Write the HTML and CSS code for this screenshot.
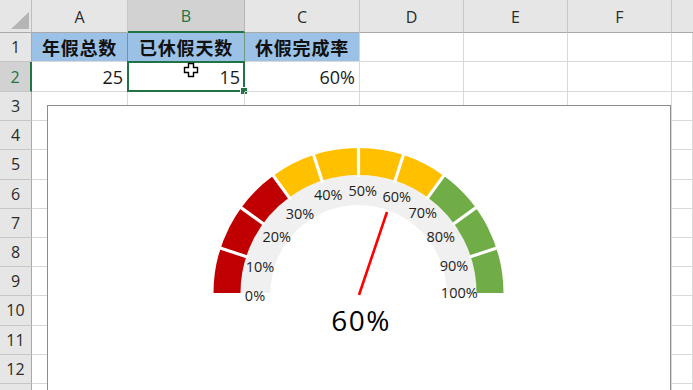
FILE: index.html
```html
<!DOCTYPE html>
<html lang="zh-CN">
<head>
<meta charset="utf-8">
<title>休假完成率</title>
<link rel="stylesheet" href="styles.css">
</head>
<body>
<div class="sheet">
  <div class="row head-row">
    <div class="corner"><span class="tri"></span></div>
    <div class="colh">A</div>
    <div class="colh sel">B</div>
    <div class="colh">C</div>
    <div class="colh">D</div>
    <div class="colh">E</div>
    <div class="colh">F</div>
    <div class="colh last"></div>
  </div>
  <div class="row r1">
    <div class="rowh">1</div>
    <div class="cell title">年假总数</div>
    <div class="cell title b1">已休假天数</div>
    <div class="cell title">休假完成率</div>
    <div class="cell"></div><div class="cell"></div><div class="cell"></div><div class="cell"></div>
  </div>
  <div class="row r2">
    <div class="rowh sel">2</div>
    <div class="cell num">25</div>
    <div class="cell num active">15<span class="handle"></span></div>
    <div class="cell num">60%</div>
    <div class="cell"></div><div class="cell"></div><div class="cell"></div><div class="cell"></div>
  </div>
  <div class="row"><div class="rowh">3</div><div class="cell"></div><div class="cell"></div><div class="cell"></div><div class="cell"></div><div class="cell"></div><div class="cell"></div><div class="cell"></div></div>
  <div class="row"><div class="rowh">4</div><div class="cell"></div><div class="cell"></div><div class="cell"></div><div class="cell"></div><div class="cell"></div><div class="cell"></div><div class="cell"></div></div>
  <div class="row"><div class="rowh">5</div><div class="cell"></div><div class="cell"></div><div class="cell"></div><div class="cell"></div><div class="cell"></div><div class="cell"></div><div class="cell"></div></div>
  <div class="row"><div class="rowh">6</div><div class="cell"></div><div class="cell"></div><div class="cell"></div><div class="cell"></div><div class="cell"></div><div class="cell"></div><div class="cell"></div></div>
  <div class="row"><div class="rowh">7</div><div class="cell"></div><div class="cell"></div><div class="cell"></div><div class="cell"></div><div class="cell"></div><div class="cell"></div><div class="cell"></div></div>
  <div class="row"><div class="rowh">8</div><div class="cell"></div><div class="cell"></div><div class="cell"></div><div class="cell"></div><div class="cell"></div><div class="cell"></div><div class="cell"></div></div>
  <div class="row"><div class="rowh">9</div><div class="cell"></div><div class="cell"></div><div class="cell"></div><div class="cell"></div><div class="cell"></div><div class="cell"></div><div class="cell"></div></div>
  <div class="row"><div class="rowh">10</div><div class="cell"></div><div class="cell"></div><div class="cell"></div><div class="cell"></div><div class="cell"></div><div class="cell"></div><div class="cell"></div></div>
  <div class="row"><div class="rowh">11</div><div class="cell"></div><div class="cell"></div><div class="cell"></div><div class="cell"></div><div class="cell"></div><div class="cell"></div><div class="cell"></div></div>
  <div class="row"><div class="rowh">12</div><div class="cell"></div><div class="cell"></div><div class="cell"></div><div class="cell"></div><div class="cell"></div><div class="cell"></div><div class="cell"></div></div>
  <div class="row"><div class="rowh"></div><div class="cell"></div><div class="cell"></div><div class="cell"></div><div class="cell"></div><div class="cell"></div><div class="cell"></div><div class="cell"></div></div>

  <svg class="cursor" width="16" height="16" viewBox="0 0 16 16">
    <path d="M5.5 1.5h5v4h4v5h-4v4h-5v-4h-4v-5h4z" fill="#fff" stroke="#000" stroke-width="1.4"/>
  </svg>

  <div class="chart">
    <svg class="gauge" width="624" height="290" viewBox="0 0 624 290">
      <path d="M208.5 188 A103 103 0 0 1 414.5 188" fill="none" stroke="#f0f0f0" stroke-width="30"/>
      <path d="M180 188 A131.5 131.5 0 0 1 234.21 81.62" fill="none" stroke="#c00000" stroke-width="27"/>
      <path d="M234.21 81.62 A131.5 131.5 0 0 1 388.79 81.62" fill="none" stroke="#ffc000" stroke-width="27"/>
      <path d="M388.79 81.62 A131.5 131.5 0 0 1 443 188" fill="none" stroke="#70ad47" stroke-width="27"/>
      <g stroke="#fff" stroke-width="3.2">
        <line x1="421.83" y1="152.16" x2="451.31" y2="142.58"/>
        <line x1="405.34" y1="119.82" x2="430.42" y2="101.59"/>
        <line x1="379.68" y1="94.16" x2="397.91" y2="69.08"/>
        <line x1="347.34" y1="77.67" x2="356.92" y2="48.19"/>
        <line x1="311.5" y1="72" x2="311.5" y2="41"/>
        <line x1="275.66" y1="77.67" x2="266.08" y2="48.19"/>
        <line x1="243.32" y1="94.16" x2="225.09" y2="69.08"/>
        <line x1="217.66" y1="119.82" x2="192.58" y2="101.59"/>
        <line x1="201.17" y1="152.16" x2="171.69" y2="142.58"/>
      </g>
      <g class="lbl" text-anchor="middle" dominant-baseline="central">
        <text x="208" y="190">0%</text>
        <text x="213" y="161">10%</text>
        <text x="229.7" y="131.7">20%</text>
        <text x="253" y="108.3">30%</text>
        <text x="281.3" y="89">40%</text>
        <text x="315.7" y="85">50%</text>
        <text x="349.7" y="91.7">60%</text>
        <text x="375.7" y="107.7">70%</text>
        <text x="393.7" y="131.7">80%</text>
        <text x="407" y="160">90%</text>
        <text x="412.3" y="187.7">100%</text>
      </g>
      <line x1="312" y1="190" x2="340" y2="107" stroke="#ff0000" stroke-width="2.6"/>
      <text class="big" x="314" y="215" text-anchor="middle" dominant-baseline="central">60%</text>
    </svg>
  </div>
</div>
</body>
</html>
```

FILE: styles.css
```css
html, body {
  margin: 0;
  padding: 0;
  background: #ffffff;
  overflow: hidden;
}

.sheet {
  position: relative;
  width: 693px;
  height: 390px;
  overflow: hidden;
  font-family: "Open Sans", "Noto Sans CJK SC", sans-serif;
  color: #222;
}

.row {
  display: grid;
  grid-template-columns: 32px 96px 117px 115px 104px 104px 104px 1fr;
  height: 29.2px;
}

.head-row { height: 33px; }
.r1 { height: 29px; }
.r2 { height: 30px; }

.corner {
  position: relative;
  background: #e6e6e6;
  border-right: 1px solid #bdbdbd;
  border-bottom: 1px solid #a9a9a9;
  box-sizing: border-box;
}

.tri {
  position: absolute;
  left: 11px;
  top: 12px;
  width: 0;
  height: 0;
  border-left: 18px solid transparent;
  border-bottom: 17px solid #b5b5b5;
}

.colh {
  background: #e6e6e6;
  border-right: 1px solid #c9c9c9;
  border-bottom: 1px solid #a9a9a9;
  box-sizing: border-box;
  display: flex;
  align-items: center;
  justify-content: center;
  font-size: 16px;
  color: #2b2b2b;
  padding-top: 1px;
}

.colh.sel {
  background: #d2d2d2;
  color: #217346;
  border-bottom: 2px solid #217346;
  border-right-color: #b5b5b5;
}

.colh.last { border-right: none; }

.rowh {
  background: #e6e6e6;
  border-right: 1px solid #a9a9a9;
  border-bottom: 1px solid #c6c6c6;
  box-sizing: border-box;
  display: flex;
  align-items: center;
  justify-content: center;
  font-size: 16px;
  color: #2b2b2b;
}

.rowh.sel {
  background: #d2d2d2;
  color: #217346;
  border-right: 2px solid #217346;
}

.cell {
  border-right: 1px solid #d9d9d9;
  border-bottom: 1px solid #d9d9d9;
  box-sizing: border-box;
  display: flex;
  align-items: center;
  font-size: 18px;
  color: #1a1a1a;
  position: relative;
}

.title {
  background: #9bc2e6;
  justify-content: center;
  font-family: "Noto Sans CJK SC", sans-serif;
  font-weight: bold;
  font-size: 18px;
  letter-spacing: 0.8px;
  color: #111;
  border-right-color: #c8d9ea;
}

.b1 {
  border-left: 1px solid #6f9a7c;
  border-right: 1px solid #6f9a7c;
  margin-left: -1px;
}

.num {
  justify-content: flex-end;
  padding-right: 4px;
  padding-top: 1px;
}

.active {
  border: 2px solid #217346;
  margin-left: -1px;
  margin-top: -1px;
  padding-right: 3px;
}

.handle {
  position: absolute;
  right: -5px;
  bottom: -5px;
  width: 6px;
  height: 6px;
  background: #217346;
  border: 1px solid #fff;
}

.cursor {
  position: absolute;
  left: 183px;
  top: 62px;
}

.chart {
  position: absolute;
  left: 47px;
  top: 105px;
  width: 624px;
  height: 300px;
  background: #fff;
  border: 1px solid #8c8c8c;
  box-sizing: border-box;
}

.gauge {
  display: block;
  margin-left: -1px;
  margin-top: -1px;
}

.lbl text {
  font-family: "Open Sans", sans-serif;
  font-size: 14.5px;
  fill: #1e1e1e;
}

.big {
  font-family: "Open Sans", sans-serif;
  font-size: 28px;
  letter-spacing: 1.5px;
  fill: #000;
}
```
